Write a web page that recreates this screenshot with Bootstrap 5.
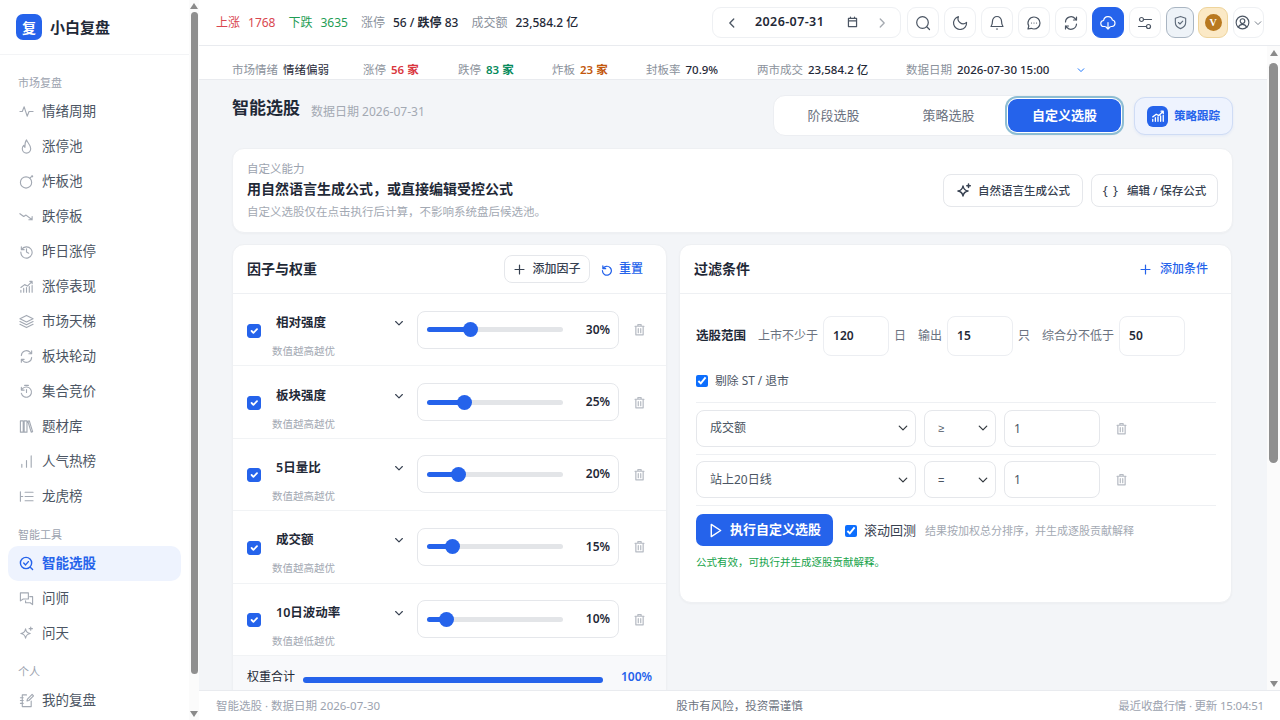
<!DOCTYPE html>
<html lang="zh-CN">
<head>
  <meta charset="UTF-8">
  <title>智能选股 - 小白复盘</title>
  <link href="https://cdn.jsdelivr.net/npm/bootstrap@5.3.0/dist/css/bootstrap.min.css" rel="stylesheet">
  <style>
    html, body { height: 100%; overflow: hidden; }
    body { font-family: "Noto Sans", "Noto Sans CJK SC", sans-serif; font-size: 13px; color: #1f2937; background: #f3f5f8; }
    svg.ico { fill: none; stroke: currentColor; stroke-width: 1.5; stroke-linecap: round; stroke-linejoin: round; flex: none; }

    .app-shell { height: 720px; }
    .side { width: 199px; flex: none; background: #fff; }
    .side-inner { width: 189px; flex: none; overflow: hidden; }
    .brand { height: 55px; padding-left: 16px; gap: 8px; border-bottom: 1px solid #f3f4f6; }
    .brand-mark { width: 26px; height: 26px; border-radius: 7px; background: #2563eb; color: #fff; font-size: 14px; font-weight: 700; }
    .brand-name { font-size: 15px; font-weight: 600; color: #1f2937; }
    .nav-group { margin-top: 10px; padding-left: 18px; height: 22px; line-height: 22px; font-size: 11px; color: #9ca3af; }
    .nav-group.first { margin-top: 17px; }
    .nav-row { height: 35px; margin: 0 8px; padding-left: 11px; gap: 8px; border-radius: 10px; font-size: 13.5px; color: #4b5563; text-decoration: none; }
    .nav-row svg { color: #a3a9b3; stroke-width: 1.2; }
    .nav-row.on { background: #eef3fe; color: #2563eb; font-weight: 600; }
    .nav-row.on svg { color: #2563eb; stroke-width: 1.5; }

    /* scrollbars as they show in the picture */
    .sbar { flex: none; background: #fbfbfb; }
    .sbar-side { width: 10px; padding: 3px 0; }
    .sbar-main { width: 13px; padding: 4px 0 3px; }
    .sbar-up, .sbar-dn { width: 0; height: 0; border-left: 4.5px solid transparent; border-right: 4.5px solid transparent; }
    .sbar-up { border-bottom: 6px solid #8a8a8a; }
    .sbar-dn { border-top: 6px solid #8a8a8a; margin-top: auto; }
    .sbar-thumb { background: #8f8f8f; border-radius: 5px; }
    .sbar-side .sbar-thumb { width: 7px; height: 662px; margin-top: 3px; }
    .sbar-main .sbar-thumb { width: 9px; height: 400px; margin-top: 7px; }

    .main-col { min-width: 0; }
    .topbar { height: 46px; flex: none; background: #fff; border-bottom: 1px solid #e9ebef; padding: 0 16px 0 17px; font-size: 12px; }
    .t-up { color: #d9474f; }
    .t-down { color: #1f9d55; }
    .t-mute { color: #8b929c; }
    .t-val { font-weight: 500; color: #1f2937; }
    .t-gap { margin-right: 13px; }
    .date-box { width: 189px; height: 31px; margin-left: auto; border: 1px solid #eef0f3; border-radius: 9px; padding: 0 11px 0 12px; font-size: 12.5px; font-weight: 600; letter-spacing: .4px; }
    .date-box svg { color: #4b5563; }
    .tool-set { gap: 5px; margin-left: 6px; }
    .tool-btn { width: 32px; height: 31px; border: 1px solid #eef0f3; border-radius: 9px; background: #fff; color: #4b5563; padding: 0; }
    .tool-btn svg.ico { stroke-width: 1.2; }
    .tool-btn.act { background: #2563eb; border-color: #2563eb; color: #fff; }
    .tool-btn.shield { width: 28px; background: #eef3f8; border-color: #a9b5c2; color: #5f6b7a; }
    .tool-btn.vip { width: 30px; background: #fbe9c6; border-color: #eed49c; margin-left: -1px; }
    .tool-btn.user { width: 31px; gap: 3px; }
    .vip-dot { width: 17px; height: 17px; border-radius: 50%; background: #b9791f; color: #fff; font: 700 10px "Liberation Serif", serif; }

    .mid-row { flex: 1; min-height: 0; }
    .scroller { flex: 1; min-width: 0; overflow: hidden; }
    .strip { height: 34px; background: #fff; border-bottom: 1px solid #e9ebef; padding: 15px 0 0 33px; font-size: 11.5px; white-space: nowrap; }
    .strip-item { flex: none; gap: 5px; }
    .strip-val { font-weight: 500; color: #1f2937; }
    .strip-txt { color: #1f2937; }
    .c-red { color: #d9363e; font-weight: 600; }
    .c-green { color: #068a5b; font-weight: 600; }
    .c-orange { color: #c2570c; font-weight: 600; }

    .page-body { padding: 15px 34px 0 33px; }
    .page-head { height: 53px; }
    .page-title { font-size: 17px; font-weight: 600; margin: 3px 0 0 0; }
    .page-sub { font-size: 12px; color: #a3a9b3; margin: 8px 0 0 11px; }
    .tab-wrap { width: 349px; height: 41px; background: #fff; border: 1px solid #eceef2; border-radius: 12px; padding: 0 0 0 2px; margin-left: auto; }
    .tab-btn { width: 115px; height: 33px; border: 0; background: none; font-size: 13px; color: #6b7280; border-radius: 9px; padding: 0; }
    .tab-btn.on { width: 113px; background: #2563eb; color: #fff; font-weight: 600; box-shadow: 0 0 0 1px #fff, 0 0 0 3px #8dbdd3; margin-left: 2px; }
    .track-btn { width: 99px; height: 38px; margin: 2px 0 0 12px; background: #eef3fe; border: 1px solid #cfdcf5; border-radius: 11px; color: #2563eb; font-size: 11.5px; font-weight: 600; gap: 6px; padding: 0; box-shadow: 0 1px 3px rgba(37,99,235,.08); }
    .track-mark { width: 21px; height: 21px; border-radius: 6px; background: #2563eb; color: #fff; }

    .panel { background: #fff; border: 1px solid #eef0f3; border-radius: 12px; box-shadow: 0 1px 2px rgba(17,24,39,.03); }
    .intro { height: 85px; padding: 0 14px; }
    .intro-tag { font-size: 11.5px; color: #9ca3af; line-height: 16px; }
    .intro-title { font-size: 14px; font-weight: 600; line-height: 24px; margin-bottom: 3px; }
    .intro-sub { font-size: 11.5px; color: #a3a9b3; line-height: 16px; }
    .ghost-btn { height: 33px; border: 1px solid #e5e7eb; border-radius: 8px; background: #fff; font-size: 11.5px; font-weight: 500; color: #374151; gap: 6px; padding: 0; }
    .brace { font-size: 13px; font-weight: 400; letter-spacing: 1px; margin-right: 2px; }

    .split { display: grid; grid-template-columns: 435px 553px; gap: 12px; margin-top: 11px; align-items: start; }
    .panel-head { height: 49px; padding: 0 14px; border-bottom: 1px solid #eef0f3; }
    .panel-title { font-size: 14px; font-weight: 600; margin: 0; }
    .link-btn { border: 0; background: none; color: #2563eb; font-size: 12px; font-weight: 500; gap: 6px; padding: 0; }
    .add-factor { width: 86px; height: 28px; font-size: 12px; }
    .reset-btn { margin: 0 9px 0 10px; }
    .add-rule { margin-right: 9px; gap: 8px; }

    .factor { height: 72.4px; padding-left: 14px; border-bottom: 1px solid #f1f3f5; }
    .factor:last-of-type { border-bottom: 0; }
    .factor .form-check-input { width: 14px; height: 14px; margin: 0; border-radius: 3px; background-color: #2563eb; border-color: #2563eb; flex: none; position: relative; top: 1px; }
    .f-name { width: 145px; margin: 12px 0 0 11px; flex: none; }
    .f-title { font-size: 12.5px; font-weight: 600; line-height: 18px; margin: 0 12px 0 4px; height: 20px; }
    .f-title svg { color: #374151; }
    .f-desc { font-size: 10.5px; color: #a3a9b3; line-height: 14px; margin-top: 11px; }
    .f-box { width: 202px; height: 38px; border: 1px solid #e5e7eb; border-radius: 8px; padding: 0 8px 0 9px; flex: none; }
    .f-pct { font-size: 12px; font-weight: 600; margin-left: auto; }
    .f-trash { color: #b6bbc3; margin-left: 14px; }
    .slide { width: 136px; height: 15px; padding: 0; flex: none; display: block; }
    .slide::-webkit-slider-runnable-track { height: 5px; border-radius: 3px; background: linear-gradient(90deg, #2563eb var(--v), #e3e5e8 var(--v)); }
    .slide::-webkit-slider-thumb { width: 15px; height: 15px; margin-top: -5px; background: #2563eb; border: 0; border-radius: 50%; }
    .sum-row { height: 46px; background: #f8f9fb; padding: 0 14px 4px 14px; font-size: 12px; }
    .sum-bar { width: 300px; height: 6px; border-radius: 3px; margin: 6px 0 0 8px; background: #2563eb; }
    .sum-pct { margin-left: auto; color: #2563eb; font-weight: 600; }

    .filter-body { padding: 22px 15px 0 16px; height: 308px; }
    .scope-row { gap: 5px; font-size: 12px; color: #6b7280; height: 40px; }
    .scope-row b { font-size: 12.5px; font-weight: 600; color: #1f2937; margin-right: 7px; }
    .scope-next { margin-left: 7px; }
    .num-box { width: 66px; height: 40px; padding: 0 9px; border: 1px solid #eceef2; border-radius: 8px; font-size: 12px; font-weight: 600; color: #1f2937; }
    .native-chk { width: 12px; height: 12px; accent-color: #0d6efd; margin: 0; }
    .st-row { gap: 7px; margin-top: 17px; height: 16px; font-size: 11.8px; color: #4b5563; }
    .rule-row { gap: 8px; padding: 6px 0; border-top: 1px solid #eef0f3; margin: 0; height: 51.5px; }
    .rule-first { margin-top: 13px; }
    .rule-row .form-select, .rule-row .form-control { height: 37px; font-size: 12px; color: #4b5563; border-color: #e5e7eb; border-radius: 8px; padding: 0 13px; box-shadow: none; }
    .rule-row .form-select { background-size: 12px 10px; background-position: right 6px center; }
    .rule-row .s-field { width: 220px; flex: none; }
    .rule-row .s-op { width: 72px; flex: none; padding-right: 24px; font-family: "Liberation Sans", sans-serif; font-size: 11px; }
    .rule-row .s-val { width: 96px; flex: none; padding: 0 9px; }
    .rule-row svg { color: #b6bbc3; margin-left: 7px; }
    .run-row { border-top: 1px solid #eef0f3; padding-top: 8px; height: 41px; gap: 12px; align-items: flex-start; }
    .run-btn { width: 137px; height: 32px; background: #2563eb; border: 0; border-radius: 7px; color: #fff; font-size: 13px; font-weight: 600; gap: 7px; padding: 0; }
    .run-chk { gap: 7px; height: 34px; font-size: 13px; color: #374151; }
    .run-note { font-size: 11px; color: #a3a9b3; margin-left: -3px; line-height: 34px; }
    .ok-note { font-size: 10.5px; color: #16a34a; margin-top: 9px; line-height: 14px; }

    .foot { height: 30px; flex: none; background: #fff; border-top: 1px solid #e9ebef; padding: 0 16px 0 17px; font-size: 11.5px; color: #9ca3af; position: relative; }
    .foot-mid { position: absolute; left: 0; right: 0; top: 0; line-height: 30px; text-align: center; color: #6b7280; }
    .foot-end { letter-spacing: -.2px; }
  </style>
</head>
<body>
  <svg width="0" height="0" class="position-absolute">
    <symbol id="i-pulse" viewBox="0 0 16 16"><path d="M1 8h2.500l2-5 3.200 10 2-5H15"/></symbol>
    <symbol id="i-flame" viewBox="0 0 16 16"><path d="M8 1c.5 2.500 4.500 5 4.500 9.500a4.500 4.500 0 0 1-9 0c0-1.500.7-2.800 1.500-3.600.2 1 .7 1.600 1.300 2C6.200 6 6.500 3 8 1z"/></symbol>
    <symbol id="i-bomb" viewBox="0 0 16 16"><circle cx="7.500" cy="9" r="6"/><path d="M11.500 4.500 13 3"/><circle cx="14" cy="2.500" r=".6"/></symbol>
    <symbol id="i-down" viewBox="0 0 16 16"><path d="M1 5l4 3 2.500-1.500L14 11.500M14 8v3.500h-3.500"/></symbol>
    <symbol id="i-hist" viewBox="0 0 16 16"><path d="M2.500 3v3h3M2.800 6A6 6 0 1 1 2 8.500M8 5v3.500l2.300 1.300"/></symbol>
    <symbol id="i-chart" viewBox="0 0 16 16"><path d="M2 14v-2M5 14v-4M8 14V9M11 14V8M14 14V7M2 9l4-3 3 1.500L14 2.500M11.500 2.500H14V5"/></symbol>
    <symbol id="i-layer" viewBox="0 0 16 16"><path d="M8 1.500 15 5 8 8.500 1 5zM1 8l7 3.500L15 8M1 11l7 3.500 7-3.500"/></symbol>
    <symbol id="i-sync" viewBox="0 0 16 16"><path d="M2.500 7A5.500 5.500 0 0 1 12 3.500l1.500 1.500M13.500 2v3h-3M13.500 9A5.500 5.500 0 0 1 4 12.500L2.500 11M2.500 14v-3h3"/></symbol>
    <symbol id="i-clock" viewBox="0 0 16 16"><path d="M6 1.500h4M2.500 10A5.500 5.500 0 1 0 4 4.700L2.500 6M2.500 3.500V6.500h3M8 6v3"/></symbol>
    <symbol id="i-books" viewBox="0 0 16 16"><path d="M1.500 2h3v12h-3zM5.500 2h3v12h-3zM9.500 2.500l1.500-.5 3.500 11.500-1.500.5z"/></symbol>
    <symbol id="i-bars" viewBox="0 0 16 16"><path d="M3 14v-3M8 14V7M13 14V2"/></symbol>
    <symbol id="i-list" viewBox="0 0 16 16"><path d="M6.500 3.500H15M6.500 8H15M6.500 12.500H15M1.500 3v10M1.500 8h2.500"/></symbol>
    <symbol id="i-scan" viewBox="0 0 16 16"><circle cx="7.500" cy="7.500" r="6"/><path d="m5 7.500 2 2 3-3.500M12 12l2.500 2.500"/></symbol>
    <symbol id="i-chat2" viewBox="0 0 16 16"><path d="M1.500 2h8.500v6.500H4.500L1.500 10.500zM11.500 6h3v8.500l-2.500-2H7v-2"/></symbol>
    <symbol id="i-star" viewBox="0 0 16 16"><path d="M7 3c.5 3 1.800 4.500 5 5-3.200.5-4.500 2-5 5-.5-3-1.800-4.500-5-5 3.200-.5 4.500-2 5-5zM12.500 1v3.500M10.800 2.800h3.500"/></symbol>
    <symbol id="i-note" viewBox="0 0 16 16"><path d="M8 2H3.500v12.500h9.500V8.500M1.500 5h3M1.500 8h3M1.500 11h3M14 1.500 9 6.500l-.5 2 2-.5 5-5z"/></symbol>
    <symbol id="i-left" viewBox="0 0 16 16"><path d="m10 3.500-4.500 4.500 4.500 4.500"/></symbol>
    <symbol id="i-right" viewBox="0 0 16 16"><path d="m6 3.500 4.500 4.500L6 12.500"/></symbol>
    <symbol id="i-cal" viewBox="0 0 16 16"><path d="M3 3h10v10H3zM3 6h10M5.500 1.500V3M10.500 1.500V3"/></symbol>
    <symbol id="i-search" viewBox="0 0 16 16"><circle cx="7.500" cy="7.500" r="5.800"/><path d="m12 12 2.500 2.500"/></symbol>
    <symbol id="i-moon" viewBox="0 0 16 16"><path d="M8 1.500A6.500 6.500 0 1 0 14.500 9 5 5 0 0 1 8 7.500a5 5 0 0 1 0-6z" transform="rotate(-14 8 8)"/></symbol>
    <symbol id="i-bell" viewBox="0 0 16 16"><path d="M8 1.500a4.500 4.500 0 0 0-4.500 4.500c0 3.500-1.500 5.500-1.500 5.500h12s-1.500-2-1.500-5.500A4.500 4.500 0 0 0 8 1.500zM7.500 14h1"/></symbol>
    <symbol id="i-chat" viewBox="0 0 16 16"><path d="M8 2a6 6 0 0 1 0 12 6 6 0 0 1-2.800-.7L2 14l.8-3A6 6 0 0 1 8 2z"/><path d="M5.500 8h.01M8 8h.01M10.500 8h.01"/></symbol>
    <symbol id="i-cloud" viewBox="0 0 16 16"><path d="M5 11.500H4a3 3 0 0 1-.4-6A4.500 4.500 0 0 1 12.400 5 3.300 3.300 0 0 1 12 11.500h-1M8 7.500v6.500M6 12l2 2 2-2"/></symbol>
    <symbol id="i-tune" viewBox="0 0 16 16"><circle cx="4.500" cy="4.500" r="2"/><circle cx="11.500" cy="11.500" r="2"/><path d="M7 4.500h7.500M1.500 11.500H9"/></symbol>
    <symbol id="i-shield" viewBox="0 0 16 16"><path d="M8 1.500 13.500 3.500V8c0 3.300-2.500 5.500-5.500 6.500C5 13.500 2.500 11.300 2.500 8V3.500zM5.800 8l1.600 1.600 3-3"/></symbol>
    <symbol id="i-user" viewBox="0 0 16 16"><circle cx="8" cy="8" r="6.800"/><circle cx="8" cy="6.500" r="2.500"/><path d="M3.500 13c1-2 2.500-3 4.500-3s3.500 1 4.500 3"/></symbol>
    <symbol id="i-chev" viewBox="0 0 16 16"><path d="m3.500 6 4.500 4.500L12.500 6"/></symbol>
    <symbol id="i-plus" viewBox="0 0 16 16"><path d="M8 2.500v11M2.500 8h11"/></symbol>
    <symbol id="i-undo" viewBox="0 0 16 16"><path d="M3.500 3.500V7H7M3.600 7A5.500 5.500 0 1 1 3 9.500"/></symbol>
    <symbol id="i-trash" viewBox="0 0 16 16"><path d="M2.500 4h11M6 4V2h4v2M3.500 4v10.500h9V4M6.500 7v5M9.500 7v5"/></symbol>
    <symbol id="i-play" viewBox="0 0 16 16"><path d="M3.500 1.500 13.500 8l-10 6.500z"/></symbol>
  </svg>

  <div class="app-shell d-flex">
    <aside class="side d-flex">
      <div class="side-inner">
        <div class="brand d-flex align-items-center">
          <span class="brand-mark d-flex align-items-center justify-content-center">复</span>
          <span class="brand-name">小白复盘</span>
        </div>
        <div class="nav-group first">市场复盘</div>
        <a class="nav-row d-flex align-items-center" href="#"><svg class="ico" width="15" height="15"><use href="#i-pulse"/></svg>情绪周期</a>
        <a class="nav-row d-flex align-items-center" href="#"><svg class="ico" width="15" height="15"><use href="#i-flame"/></svg>涨停池</a>
        <a class="nav-row d-flex align-items-center" href="#"><svg class="ico" width="15" height="15"><use href="#i-bomb"/></svg>炸板池</a>
        <a class="nav-row d-flex align-items-center" href="#"><svg class="ico" width="15" height="15"><use href="#i-down"/></svg>跌停板</a>
        <a class="nav-row d-flex align-items-center" href="#"><svg class="ico" width="15" height="15"><use href="#i-hist"/></svg>昨日涨停</a>
        <a class="nav-row d-flex align-items-center" href="#"><svg class="ico" width="15" height="15"><use href="#i-chart"/></svg>涨停表现</a>
        <a class="nav-row d-flex align-items-center" href="#"><svg class="ico" width="15" height="15"><use href="#i-layer"/></svg>市场天梯</a>
        <a class="nav-row d-flex align-items-center" href="#"><svg class="ico" width="15" height="15"><use href="#i-sync"/></svg>板块轮动</a>
        <a class="nav-row d-flex align-items-center" href="#"><svg class="ico" width="15" height="15"><use href="#i-clock"/></svg>集合竞价</a>
        <a class="nav-row d-flex align-items-center" href="#"><svg class="ico" width="15" height="15"><use href="#i-books"/></svg>题材库</a>
        <a class="nav-row d-flex align-items-center" href="#"><svg class="ico" width="15" height="15"><use href="#i-bars"/></svg>人气热榜</a>
        <a class="nav-row d-flex align-items-center" href="#"><svg class="ico" width="15" height="15"><use href="#i-list"/></svg>龙虎榜</a>
        <div class="nav-group">智能工具</div>
        <a class="nav-row on d-flex align-items-center" href="#"><svg class="ico" width="15" height="15"><use href="#i-scan"/></svg>智能选股</a>
        <a class="nav-row d-flex align-items-center" href="#"><svg class="ico" width="15" height="15"><use href="#i-chat2"/></svg>问师</a>
        <a class="nav-row d-flex align-items-center" href="#"><svg class="ico" width="15" height="15"><use href="#i-star"/></svg>问天</a>
        <div class="nav-group">个人</div>
        <a class="nav-row d-flex align-items-center" href="#"><svg class="ico" width="15" height="15"><use href="#i-note"/></svg>我的复盘</a>
      </div>
      <div class="sbar sbar-side d-flex flex-column align-items-center">
        <span class="sbar-up"></span><span class="sbar-thumb"></span><span class="sbar-dn"></span>
      </div>
    </aside>

    <div class="main-col flex-grow-1 d-flex flex-column">
      <header class="topbar d-flex align-items-center">
        <span class="t-up me-2">上涨</span><span class="t-up t-gap">1768</span>
        <span class="t-down me-2">下跌</span><span class="t-down t-gap">3635</span>
        <span class="t-mute me-2">涨停</span><span class="t-val t-gap">56 / <b class="fw-semibold">跌停</b> 83</span>
        <span class="t-mute me-2">成交额</span><span class="t-val">23,584.2 亿</span>
        <div class="date-box d-flex align-items-center">
          <svg class="ico" width="14" height="14"><use href="#i-left"/></svg>
          <span class="ms-3">2026-07-31</span>
          <svg class="ico ms-auto" width="13" height="13"><use href="#i-cal"/></svg>
          <svg class="ico ms-3 opacity-50" width="14" height="14"><use href="#i-right"/></svg>
        </div>
        <div class="tool-set d-flex align-items-center">
          <button class="tool-btn d-flex align-items-center justify-content-center"><svg class="ico" width="16" height="16"><use href="#i-search"/></svg></button>
          <button class="tool-btn d-flex align-items-center justify-content-center"><svg class="ico" width="16" height="16"><use href="#i-moon"/></svg></button>
          <button class="tool-btn d-flex align-items-center justify-content-center"><svg class="ico" width="16" height="16"><use href="#i-bell"/></svg></button>
          <button class="tool-btn d-flex align-items-center justify-content-center"><svg class="ico" width="16" height="16"><use href="#i-chat"/></svg></button>
          <button class="tool-btn d-flex align-items-center justify-content-center"><svg class="ico" width="16" height="16"><use href="#i-sync"/></svg></button>
          <button class="tool-btn act d-flex align-items-center justify-content-center"><svg class="ico" width="16" height="16"><use href="#i-cloud"/></svg></button>
          <button class="tool-btn d-flex align-items-center justify-content-center"><svg class="ico" width="16" height="16"><use href="#i-tune"/></svg></button>
          <button class="tool-btn shield d-flex align-items-center justify-content-center"><svg class="ico" width="15" height="15"><use href="#i-shield"/></svg></button>
          <button class="tool-btn vip d-flex align-items-center justify-content-center"><span class="vip-dot d-flex align-items-center justify-content-center">V</span></button>
          <button class="tool-btn user d-flex align-items-center justify-content-center"><svg class="ico" width="15" height="15"><use href="#i-user"/></svg><svg class="ico" width="10" height="10"><use href="#i-chev"/></svg></button>
        </div>
      </header>

      <div class="mid-row d-flex">
        <div class="scroller">
          <div class="strip d-flex align-items-center">
            <span class="strip-item d-inline-flex" style="width:131px"><span class="t-mute">市场情绪</span><span class="strip-txt">情绪偏弱</span></span>
            <span class="strip-item d-inline-flex" style="width:95px"><span class="t-mute">涨停</span><span class="c-red">56 家</span></span>
            <span class="strip-item d-inline-flex" style="width:94px"><span class="t-mute">跌停</span><span class="c-green">83 家</span></span>
            <span class="strip-item d-inline-flex" style="width:94px"><span class="t-mute">炸板</span><span class="c-orange">23 家</span></span>
            <span class="strip-item d-inline-flex" style="width:111px"><span class="t-mute">封板率</span><span class="strip-val">70.9%</span></span>
            <span class="strip-item d-inline-flex" style="width:149px"><span class="t-mute">两市成交</span><span class="strip-val">23,584.2 亿</span></span>
            <span class="strip-item d-inline-flex" style="width:170px"><span class="t-mute">数据日期</span><span class="strip-val">2026-07-30 15:00</span></span>
            <svg class="ico text-primary" width="10" height="10"><use href="#i-chev"/></svg>
          </div>

          <div class="page-body">
            <div class="page-head d-flex align-items-start">
              <h1 class="page-title">智能选股</h1>
              <span class="page-sub">数据日期 2026-07-31</span>
              <div class="tab-wrap d-flex align-items-center">
                <button class="tab-btn">阶段选股</button>
                <button class="tab-btn">策略选股</button>
                <button class="tab-btn on">自定义选股</button>
              </div>
              <button class="track-btn d-flex align-items-center justify-content-center">
                <span class="track-mark d-flex align-items-center justify-content-center"><svg class="ico" width="14" height="14"><use href="#i-chart"/></svg></span>策略跟踪
              </button>
            </div>

            <section class="panel intro d-flex align-items-center">
              <div>
                <div class="intro-tag">自定义能力</div>
                <div class="intro-title">用自然语言生成公式，或直接编辑受控公式</div>
                <div class="intro-sub">自定义选股仅在点击执行后计算，不影响系统盘后候选池。</div>
              </div>
              <button class="ghost-btn d-flex align-items-center justify-content-center ms-auto" style="width:140px"><svg class="ico" width="16" height="16"><use href="#i-star"/></svg>自然语言生成公式</button>
              <button class="ghost-btn d-flex align-items-center justify-content-center ms-2" style="width:127px"><span class="brace">{ }</span>编辑 / 保存公式</button>
            </section>

            <div class="split">
              <section class="panel overflow-hidden">
                <div class="panel-head d-flex align-items-center">
                  <h2 class="panel-title">因子与权重</h2>
                  <button class="ghost-btn add-factor d-flex align-items-center justify-content-center ms-auto"><svg class="ico" width="13" height="13"><use href="#i-plus"/></svg>添加因子</button>
                  <button class="link-btn reset-btn d-flex align-items-center"><svg class="ico" width="13" height="13"><use href="#i-undo"/></svg>重置</button>
                </div>

                <div class="factor d-flex align-items-center">
                  <input class="form-check-input" type="checkbox" checked>
                  <div class="f-name"><div class="f-title d-flex justify-content-between align-items-center">相对强度<svg class="ico" width="12" height="12"><use href="#i-chev"/></svg></div><div class="f-desc">数值越高越优</div></div>
                  <div class="f-box d-flex align-items-center"><input type="range" class="form-range slide" value="30" style="--v:30%"><span class="f-pct">30%</span></div>
                  <svg class="ico f-trash" width="13" height="13"><use href="#i-trash"/></svg>
                </div>
                <div class="factor d-flex align-items-center">
                  <input class="form-check-input" type="checkbox" checked>
                  <div class="f-name"><div class="f-title d-flex justify-content-between align-items-center">板块强度<svg class="ico" width="12" height="12"><use href="#i-chev"/></svg></div><div class="f-desc">数值越高越优</div></div>
                  <div class="f-box d-flex align-items-center"><input type="range" class="form-range slide" value="25" style="--v:25%"><span class="f-pct">25%</span></div>
                  <svg class="ico f-trash" width="13" height="13"><use href="#i-trash"/></svg>
                </div>
                <div class="factor d-flex align-items-center">
                  <input class="form-check-input" type="checkbox" checked>
                  <div class="f-name"><div class="f-title d-flex justify-content-between align-items-center">5日量比<svg class="ico" width="12" height="12"><use href="#i-chev"/></svg></div><div class="f-desc">数值越高越优</div></div>
                  <div class="f-box d-flex align-items-center"><input type="range" class="form-range slide" value="20" style="--v:20%"><span class="f-pct">20%</span></div>
                  <svg class="ico f-trash" width="13" height="13"><use href="#i-trash"/></svg>
                </div>
                <div class="factor d-flex align-items-center">
                  <input class="form-check-input" type="checkbox" checked>
                  <div class="f-name"><div class="f-title d-flex justify-content-between align-items-center">成交额<svg class="ico" width="12" height="12"><use href="#i-chev"/></svg></div><div class="f-desc">数值越高越优</div></div>
                  <div class="f-box d-flex align-items-center"><input type="range" class="form-range slide" value="15" style="--v:15%"><span class="f-pct">15%</span></div>
                  <svg class="ico f-trash" width="13" height="13"><use href="#i-trash"/></svg>
                </div>
                <div class="factor d-flex align-items-center">
                  <input class="form-check-input" type="checkbox" checked>
                  <div class="f-name"><div class="f-title d-flex justify-content-between align-items-center">10日波动率<svg class="ico" width="12" height="12"><use href="#i-chev"/></svg></div><div class="f-desc">数值越低越优</div></div>
                  <div class="f-box d-flex align-items-center"><input type="range" class="form-range slide" value="10" style="--v:10%"><span class="f-pct">10%</span></div>
                  <svg class="ico f-trash" width="13" height="13"><use href="#i-trash"/></svg>
                </div>

                <div class="sum-row d-flex align-items-center">
                  <span>权重合计</span>
                  <div class="sum-bar"></div>
                  <span class="sum-pct">100%</span>
                </div>
              </section>

              <section class="panel">
                <div class="panel-head d-flex align-items-center">
                  <h2 class="panel-title">过滤条件</h2>
                  <button class="link-btn add-rule d-flex align-items-center ms-auto"><svg class="ico" width="13" height="13"><use href="#i-plus"/></svg>添加条件</button>
                </div>
                <div class="filter-body">
                  <div class="scope-row d-flex align-items-center">
                    <b>选股范围</b>上市不少于
                    <span class="num-box d-flex align-items-center">120</span>日
                    <span class="scope-next">输出</span>
                    <span class="num-box d-flex align-items-center">15</span>只
                    <span class="scope-next">综合分不低于</span>
                    <span class="num-box d-flex align-items-center">50</span>
                  </div>
                  <label class="st-row d-flex align-items-center"><input class="native-chk" type="checkbox" checked>剔除 ST / 退市</label>
                  <div class="rule-row rule-first d-flex align-items-center">
                    <select class="form-select s-field"><option>成交额</option></select>
                    <select class="form-select s-op"><option>≥</option></select>
                    <input class="form-control s-val" value="1">
                    <svg class="ico" width="13" height="13"><use href="#i-trash"/></svg>
                  </div>
                  <div class="rule-row d-flex align-items-center">
                    <select class="form-select s-field"><option>站上20日线</option></select>
                    <select class="form-select s-op"><option>=</option></select>
                    <input class="form-control s-val" value="1">
                    <svg class="ico" width="13" height="13"><use href="#i-trash"/></svg>
                  </div>
                  <div class="run-row d-flex">
                    <button class="run-btn d-flex align-items-center justify-content-center"><svg class="ico" width="15" height="15"><use href="#i-play"/></svg>执行自定义选股</button>
                    <label class="run-chk d-flex align-items-center"><input class="native-chk" type="checkbox" checked>滚动回测</label>
                    <span class="run-note">结果按加权总分排序，并生成逐股贡献解释</span>
                  </div>
                  <div class="ok-note">公式有效，可执行并生成逐股贡献解释。</div>
                </div>
              </section>
            </div>
          </div>
        </div>
        <div class="sbar sbar-main d-flex flex-column align-items-center">
          <span class="sbar-up"></span><span class="sbar-thumb"></span><span class="sbar-dn"></span>
        </div>
      </div>

      <footer class="foot d-flex align-items-center justify-content-between">
        <span>智能选股 · 数据日期 2026-07-30</span>
        <span class="foot-mid">股市有风险，投资需谨慎</span>
        <span class="foot-end">最近收盘行情 · 更新 15:04:51</span>
      </footer>
    </div>
  </div>

  <script src="https://cdn.jsdelivr.net/npm/bootstrap@5.3.0/dist/js/bootstrap.bundle.min.js"></script>
</body>
</html>
